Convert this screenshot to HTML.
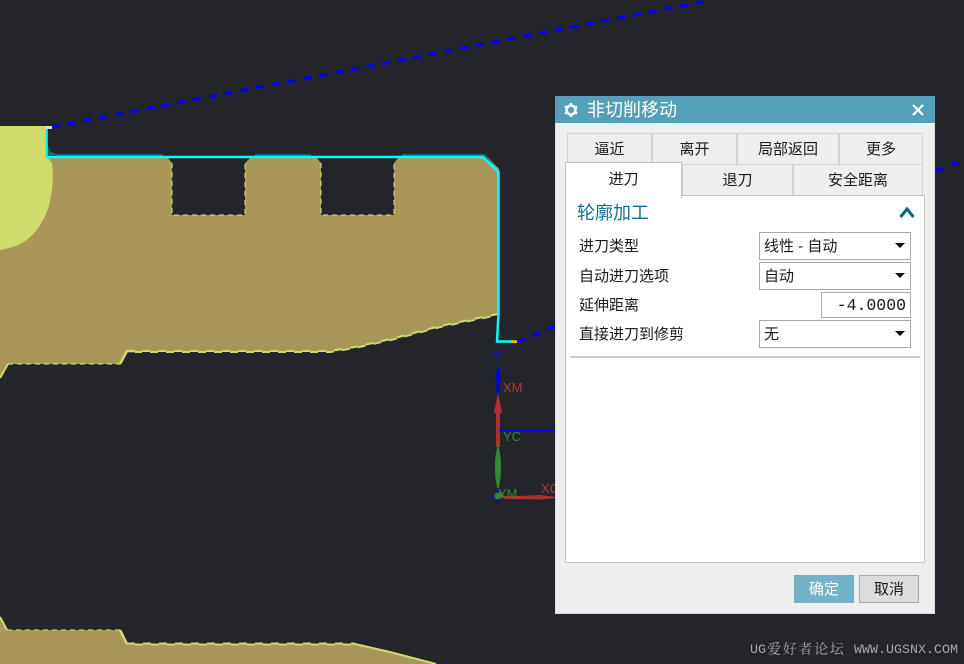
<!DOCTYPE html>
<html><head><meta charset="utf-8">
<style>
html,body{margin:0;padding:0;background:#23252a;}
#r{position:relative;width:964px;height:664px;overflow:hidden;background:#23252a;font-family:"Liberation Sans","Noto Sans CJK SC",sans-serif;font-size:15px;color:#1a1a1a;}
#r>svg{position:absolute;left:0;top:0;}
.a{position:absolute;box-sizing:border-box;white-space:nowrap;}
.t{position:absolute;box-sizing:border-box;background:#eee;border:1px solid #d2d2d2;text-align:center;line-height:31px;height:32px;}
.s{position:absolute;box-sizing:border-box;left:759px;width:152px;height:28px;background:#fff;border:1px solid #aaa;line-height:28px;padding-left:4px;}
.s:after{content:"";position:absolute;right:5px;top:10px;border-left:5px solid transparent;border-right:5px solid transparent;border-top:5px solid #111;}
.l{position:absolute;left:579px;line-height:20px;white-space:nowrap;}
.w{position:absolute;top:643px;line-height:16px;color:#a8a8a8;white-space:nowrap;font-size:13.330px;font-family:'Liberation Mono','Noto Serif CJK SC',serif;}
</style></head><body><div id="r">
<svg width="964" height="664" viewBox="0 0 964 664">
<path fill="#a9975a" d="M0 127H47V157H167L172 163V215H245V163L251 157H316L321 163V215H394V163L399 157H483L498 172V314L440 326L395 338L355 347L330 351H135L127 351L120 364H8L0 378Z"/>
<path fill="#a9975a" d="M0 617L7 630H120L127 644H355L390 652L436 664H0Z"/>
<path fill="#cfdb6b" d="M0 126H47V157L52 163C54 180 52 200 46 214C40 228 30 240 18 245C10 248 5 249 0 250Z"/>
<path fill="none" stroke="#cfdb6b" stroke-width="1.500" stroke-dasharray="5 4" opacity=".75" d="M172 163V215H245V163M321 163V215H394V163M8 364H120M7 630H120"/>
<path fill="none" stroke="#cfdb6b" stroke-width="2" stroke-dasharray="8 8" d="M498 314L440 326L395 338L355 347L330 351H135"/>
<path fill="none" stroke="#cfdb6b" stroke-width="2" stroke-dasharray="8 8" stroke-dashoffset="8" transform="translate(0,1)" d="M498 314L440 326L395 338L355 347L330 351H135"/>
<path fill="none" stroke="#cfdb6b" stroke-width="2.600" d="M135 351L127 351L120 364M120 630L127 644"/>
<path fill="none" stroke="#cfdb6b" stroke-width="2" stroke-dasharray="8 8" d="M127 643.500H355"/>
<path fill="none" stroke="#cfdb6b" stroke-width="2" stroke-dasharray="8 8" stroke-dashoffset="8" d="M127 644.500H355"/>
<path fill="none" stroke="#cfdb6b" stroke-width="2" d="M355 644L390 652L436 664M0 378L8 364M0 617L7 630"/>
<path fill="#0b6d70" d="M47 143L50 151L58 155H47Z"/>
<path fill="none" stroke="#0b7478" stroke-width="2" d="M56 155H163M255 155H311M402 155H484L499 170"/>
<path fill="#a9975a" d="M486 156L499 169V172Z"/>
<path fill="none" stroke="#00ffff" stroke-width="2.500" d="M46.500 128V157H483L498.500 172V314L497 341.500H512"/>
<rect x="511" y="340.200" width="6" height="2.800" fill="#f5b800"/>
<rect x="46" y="126" width="6" height="3" fill="#f7d0dd"/>
<path fill="none" stroke="#0000ff" stroke-width="3.200" stroke-dasharray="8 8" d="M52 127L710 0.500"/>
<path fill="none" stroke="#0000ff" stroke-width="3.200" stroke-dasharray="8 8" d="M518 342L556 326M936 171L964 160"/>
<path fill="none" stroke="#1414e6" stroke-width="1.500" d="M494 352L498 356L502 352M498 356V360"/>
<path fill="#0000e0" d="M498 365L501.500 380H499.500V393H496.500V380H494.500Z"/>
<path fill="#b13131" d="M498 393L502 413H500V447H496V413H494Z"/>
<path fill="#2f8a35" d="M498 445C500.500 452 501 460 501 468C501 476 500 484 498 492C496 484 495 476 495 468C495 460 495.500 452 498 445Z"/>
<path stroke="#0000ff" stroke-width="1.500" fill="none" d="M499 430.500H556M491 497.500H556M498 488V504"/>
<path fill="#b13131" d="M499 491L505 496H520L540 495L556 497V498L540 499.500L505 499L499 497Z"/>
<circle cx="498" cy="496" r="3.500" fill="#2f8a35"/>
</svg>
<div class="a" style="left:503px;top:380px;font-size:13px;line-height:15px;color:#b83838">XM</div>
<div class="a" style="left:503px;top:429px;font-size:13px;line-height:15px;color:#2f8a35">YC</div>
<div class="a" style="left:498px;top:486px;font-size:13px;line-height:15px;color:#2f8a35">YM</div>
<div class="a" style="left:541px;top:481px;font-size:13px;line-height:15px;color:#b83838">XC</div>

<div class="a" style="left:555px;top:96px;width:380px;height:518px;background:#eee;border:1px solid #dcdcdc;"></div>
<div class="a" style="left:555px;top:96px;width:380px;height:27px;background:#559fba;"></div>
<svg style="left:563px;top:102px" width="16" height="16" viewBox="0 0 16 16"><circle cx="8" cy="8" r="4.500" fill="none" stroke="#fff" stroke-width="2.600"/><path stroke="#fff" stroke-width="2.200" d="M8 1V3.500M8 12.500V15M1.900 4.500L4 5.700M12 10.300L14.100 11.500M1.900 11.500L4 10.300M12 5.700L14.100 4.500"/></svg>
<div class="a" style="left:587px;top:98px;font-size:18px;line-height:25px;color:#fff">非切削移动</div>
<svg style="left:911px;top:103px" width="14" height="14" viewBox="0 0 14 14"><path stroke="#fff" stroke-width="2.200" d="M2 2L12 12M12 2L2 12"/></svg>

<div class="t" style="left:567px;top:133px;width:85px">逼近</div>
<div class="t" style="left:652px;top:133px;width:85px">离开</div>
<div class="t" style="left:737px;top:133px;width:102px">局部返回</div>
<div class="t" style="left:839px;top:133px;width:84px">更多</div>
<div class="t" style="left:682px;top:164px;width:111px;">退刀</div>
<div class="t" style="left:793px;top:164px;width:130px;">安全距离</div>
<div class="a" style="left:565px;top:195px;width:360px;height:368px;background:#fff;border:1px solid #c4c4c4;"></div>
<div class="a" style="left:565px;top:162px;width:117px;height:36px;background:#fff;border:1px solid #c4c4c4;border-bottom:none;text-align:center;line-height:34px;">进刀</div>

<div class="a" style="left:577px;top:200px;font-size:18px;line-height:26px;color:#15708f">轮廓加工</div>
<svg style="left:898px;top:205px" width="18" height="14" viewBox="0 0 18 14"><path fill="none" stroke="#0f6484" stroke-width="3" d="M2.500 12L9 4L15.500 12"/></svg>

<div class="l" style="top:237px">进刀类型</div>
<div class="l" style="top:267px">自动进刀选项</div>
<div class="l" style="top:296px">延伸距离</div>
<div class="l" style="top:325px">直接进刀到修剪</div>
<div class="s" style="top:232px">线性 - 自动</div>
<div class="s" style="top:262px">自动</div>
<div class="a" style="left:821px;top:292px;width:90px;height:26px;background:#fff;border:1px solid #aaa;text-align:right;padding-right:4px;font-family:'Liberation Mono',monospace;font-size:16.500px;line-height:25px;">-4.0000</div>
<div class="s" style="top:320px">无</div>
<div class="a" style="left:570px;top:356px;width:350px;height:2px;background:#d0d0d0;"></div>

<div class="a" style="left:794px;top:575px;width:60px;height:28px;background:#72b3c9;color:#fff;text-align:center;line-height:29px;">确定</div>
<div class="a" style="left:859px;top:575px;width:60px;height:28px;background:#dcdcdc;border:1px solid #aaa;text-align:center;line-height:27px;">取消</div>

<div class="w" style="left:750px">UG</div>
<div class="w" style="left:767px;font-size:14px;letter-spacing:1.700px">爱好者论坛</div>
<div class="w" style="left:854px">WWW.UGSNX.COM</div>
</div></body></html>
